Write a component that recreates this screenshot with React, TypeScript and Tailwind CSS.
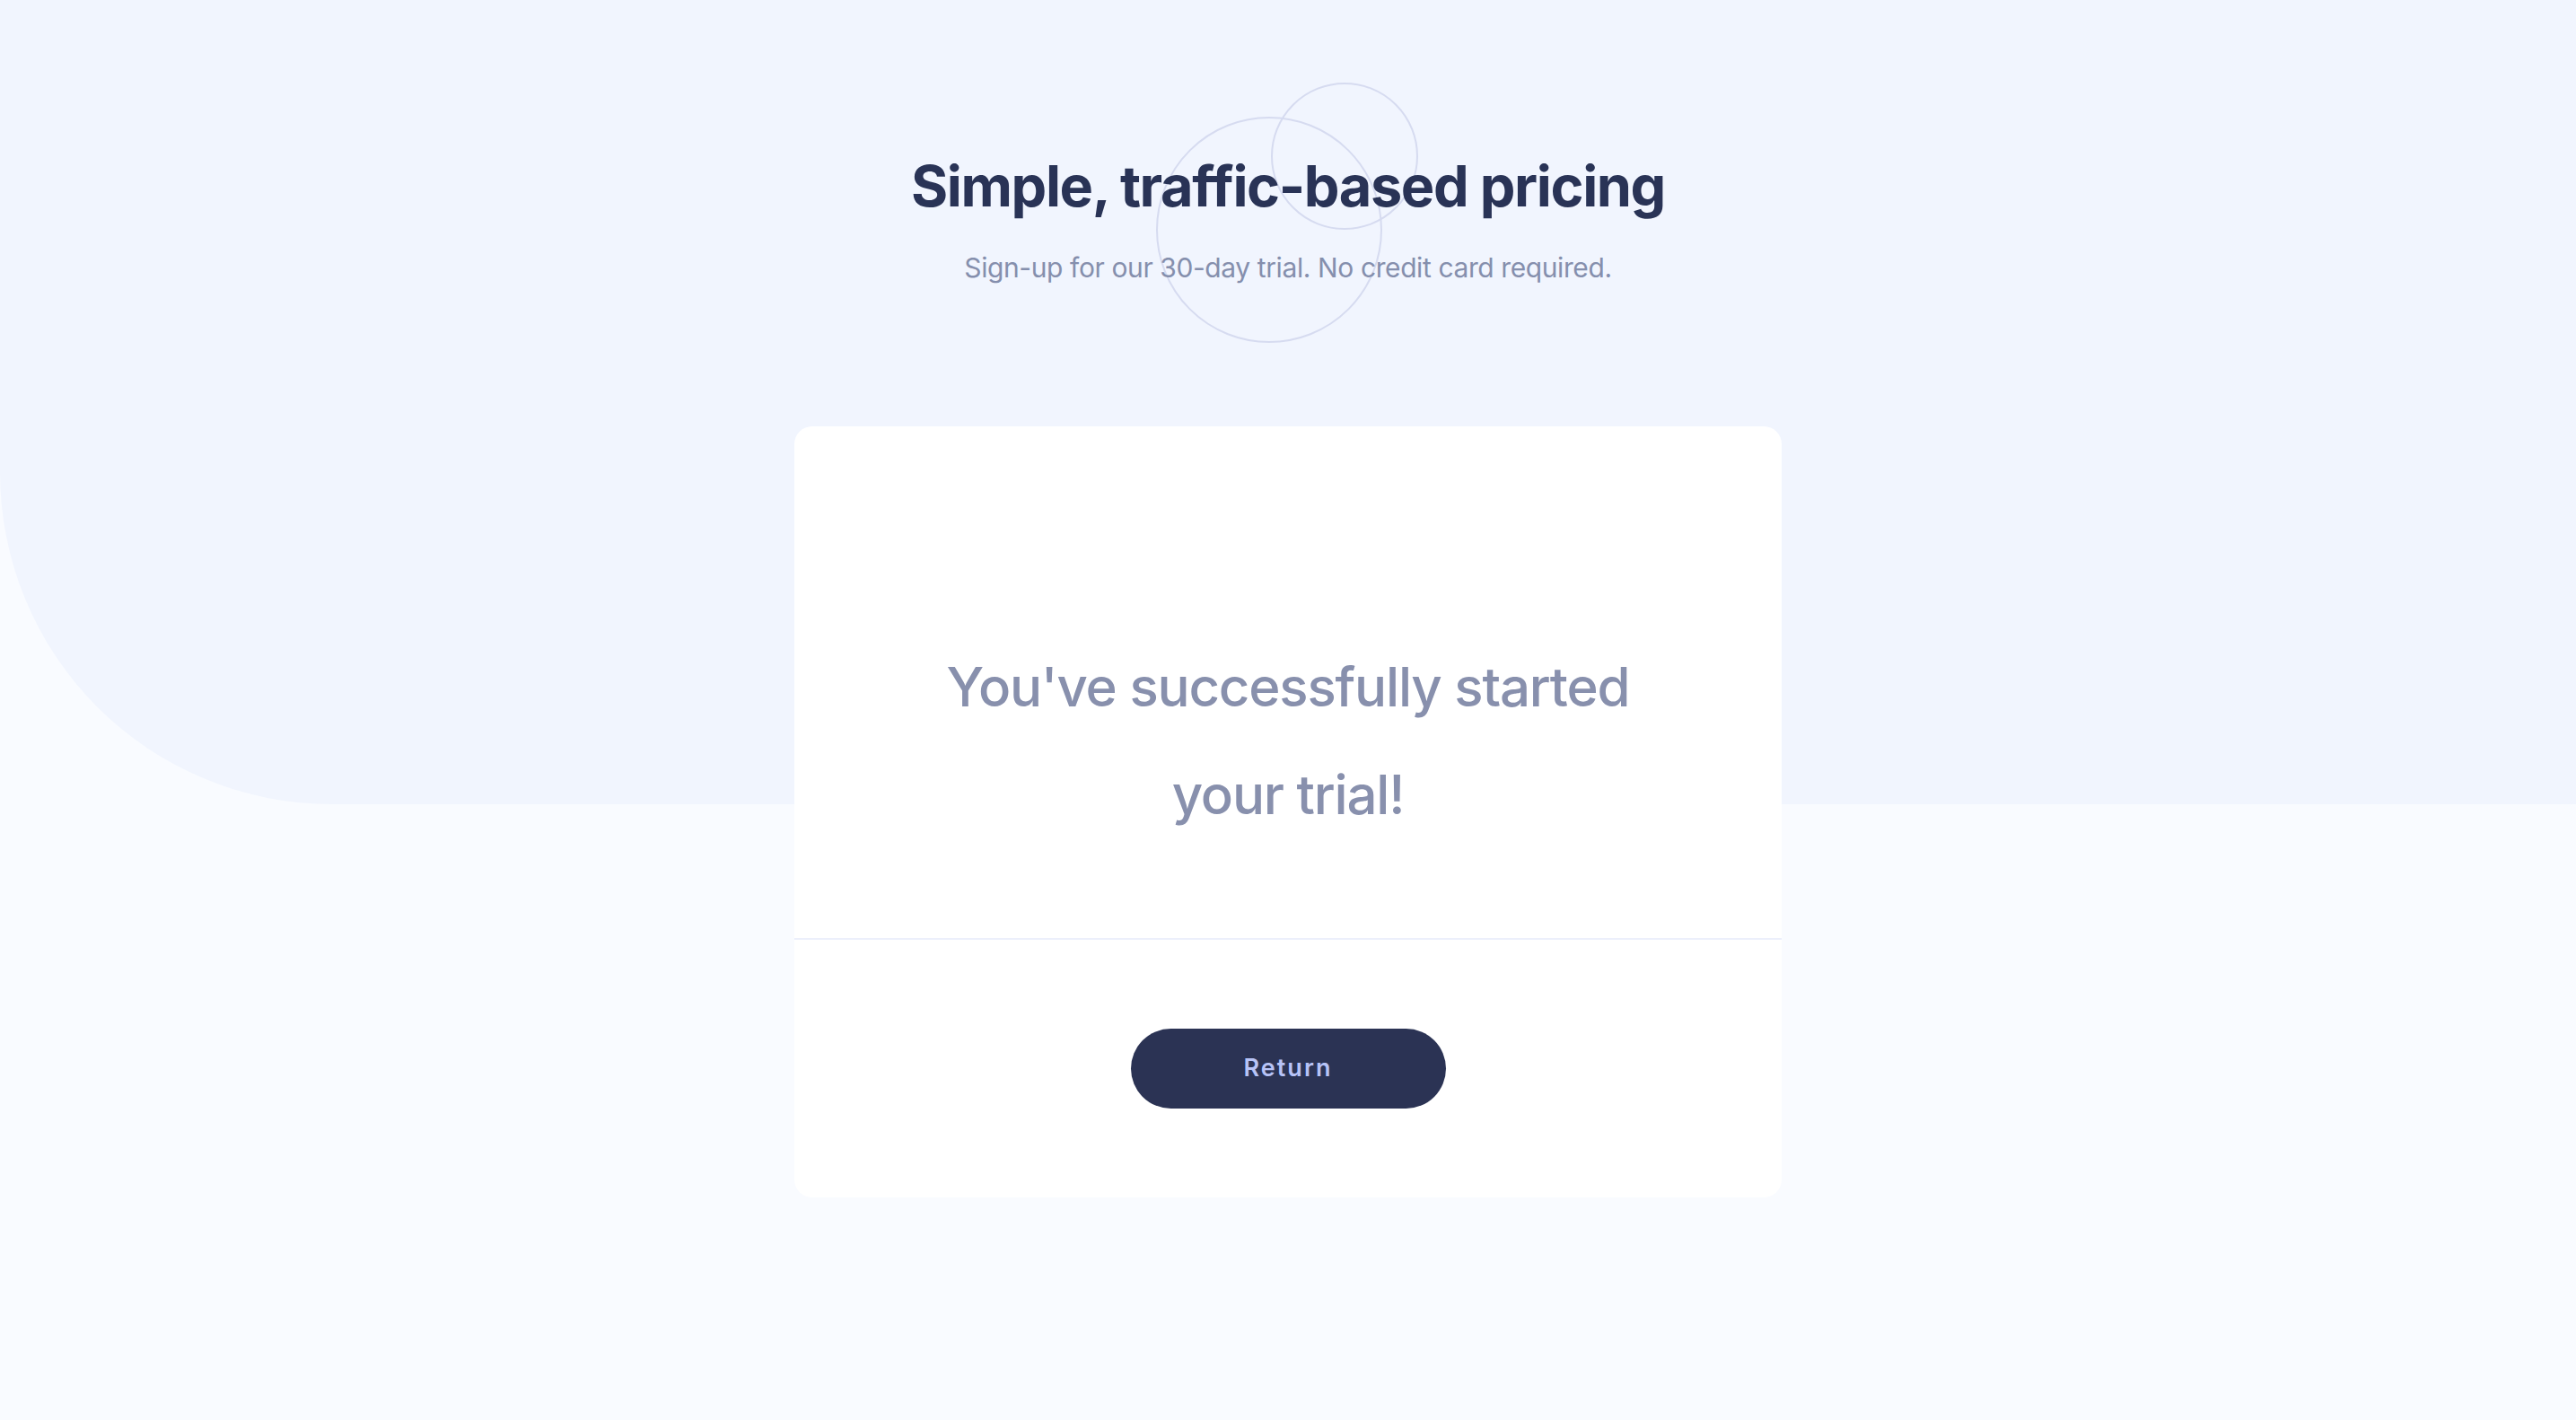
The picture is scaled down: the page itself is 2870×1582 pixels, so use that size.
import React from 'react';

const Circles: React.FC = () => (
  <svg
    className="absolute top-[85px] left-[calc(50%-155px)] pointer-events-none"
    width="310"
    height="305"
    viewBox="0 0 310 305"
    fill="none"
  >
    <circle cx="218" cy="89" r="81" stroke="#d6dbf0" strokeWidth="2" />
    <circle cx="134" cy="171" r="125" stroke="#d6dbf0" strokeWidth="2" />
  </svg>
);

export default function App() {
  return (
    <div className="relative min-h-screen bg-[#f9fbff] font-['Inter','Noto_Sans',sans-serif]">
      {/* background band */}
      <div className="absolute inset-x-0 top-0 h-[896px] bg-[#f1f5fe] rounded-bl-[370px]" />
      <Circles />

      <div className="relative flex flex-col items-center">
        <header className="pt-[170px] text-center">
          <h1 className="text-[63px] leading-[1.2] font-bold text-[#293356] tracking-[-1.4px]">
            Simple, traffic-based pricing
          </h1>
          <p className="mt-[33px] text-[30px] leading-[1.3] text-[#858fad] tracking-[-0.4px]">
            Sign-up for our 30-day trial. No credit card required.
          </p>
        </header>

        <div className="mt-[157px] w-[1100px] bg-white rounded-[20px] mb-[247px]">
          <div className="h-[570px] pt-[230px] text-center">
            <p className="text-[60px] leading-[120px] font-medium text-[#8890ad] tracking-[-1.2px]">
              You've successfully started
              <br />
              your trial!
            </p>
          </div>
          <div className="h-[2px] bg-[#eceffb]" />
          <div className="h-[287px] flex items-center justify-center">
            <button className="w-[351px] h-[89px] rounded-full bg-[#2b3354] text-[#b7c3f7] text-[27px] font-semibold tracking-[2px]">
              Return
            </button>
          </div>
        </div>
      </div>
    </div>
  );
}
